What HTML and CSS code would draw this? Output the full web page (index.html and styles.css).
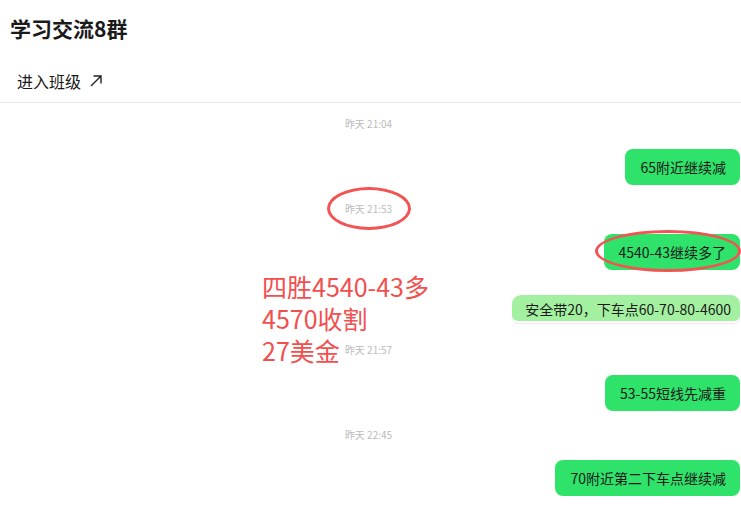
FILE: index.html
```html
<!DOCTYPE html>
<html>
<head>
    <title>学习交流8群</title>
    <link rel="stylesheet" href="styles.css">
</head>
<body>
    <div class="page">
        <h1 class="title">学习交流8群</h1>
        <div class="nav">
            <span>进入班级</span>
            <svg class="arrow" width="14" height="14" viewBox="0 0 14 14">
                <path d="M2 12 L12 2 M4.5 2 H12 V9.5" fill="none" stroke="#222" stroke-width="1.4"/>
            </svg>
        </div>
        <div class="chat">
            <div class="time">昨天 21:04</div>
            <div class="row"><div class="bubble">65附近继续减</div></div>
            <div class="time">昨天 21:53</div>
            <div class="row"><div class="bubble">4540-43继续多了</div></div>
            <div class="row cut"><div class="bubble light">安全带20，下车点60-70-80-4600</div></div>
            <div class="time">昨天 21:57</div>
            <div class="row"><div class="bubble">53-55短线先减重</div></div>
            <div class="time">昨天 22:45</div>
            <div class="row"><div class="bubble">70附近第二下车点继续减</div></div>
        </div>

        <!-- annotations drawn over the screenshot -->
        <div class="ring ring-time"></div>
        <div class="ring ring-msg"></div>
        <div class="note">四胜4540-43多<br>4570收割<br>27美金</div>
    </div>
</body>
</html>
```

FILE: styles.css
```css
body {
    margin: 0;
    background-color: #ffffff;
    font-family: "Noto Sans CJK SC", "Noto Sans", sans-serif;
    color: #1a1a1a;
}
.page {
    position: relative;
    width: 741px;
    height: 511px;
    overflow: hidden;
}
.title {
    margin: 0;
    padding: 14px 0 0 10px;
    font-size: 21px;
    line-height: 28px;
    font-weight: bold;
    color: #1a1a1a;
}
.nav {
    display: flex;
    align-items: center;
    gap: 8px;
    padding: 28px 0 0 17px;
    height: 22px;
    font-size: 16px;
    line-height: 22px;
    border-bottom: 1px solid #e6e6e6;
    padding-bottom: 10px;
}
.arrow {
    display: block;
}
.chat {
    display: flex;
    flex-direction: column;
    padding: 12px 0 0 0;
}
.time {
    text-align: center;
    font-size: 10px;
    line-height: 18px;
    color: #bbbbbb;
    margin-bottom: 16px;
    padding-right: 4px;
}
.row {
    display: flex;
    justify-content: flex-end;
    padding-right: 1px;
    margin-bottom: 15px;
}
.row + .row {
    margin-top: 10px;
}
.bubble {
    background-color: #2ee26a;
    border-radius: 8px;
    padding: 0 14px 0 15px;
    font-size: 14px;
    line-height: 36px;
    height: 36px;
    color: #1a1a1a;
}
.cut {
    margin-bottom: 20px;
}
.bubble.light {
    background-color: #a2f0a0;
    height: 26px;
    line-height: 28px;
    padding: 0 9px 0 13px;
    border-radius: 9px 9px 6px 6px;
    box-shadow: 0 3px 0 -1px #ffffff, 0 3px 1px 0 #ececec;
}
.ring {
    position: absolute;
    border: 3.5px solid #f25454;
    border-radius: 50%;
    box-sizing: border-box;
}
.ring-time {
    left: 327px;
    top: 187px;
    width: 84px;
    height: 43px;
}
.ring-msg {
    left: 595px;
    top: 230px;
    width: 146px;
    height: 42px;
}
.note {
    position: absolute;
    left: 262px;
    top: 270px;
    font-size: 25px;
    line-height: 32px;
    color: #f24f4f;
}
```
